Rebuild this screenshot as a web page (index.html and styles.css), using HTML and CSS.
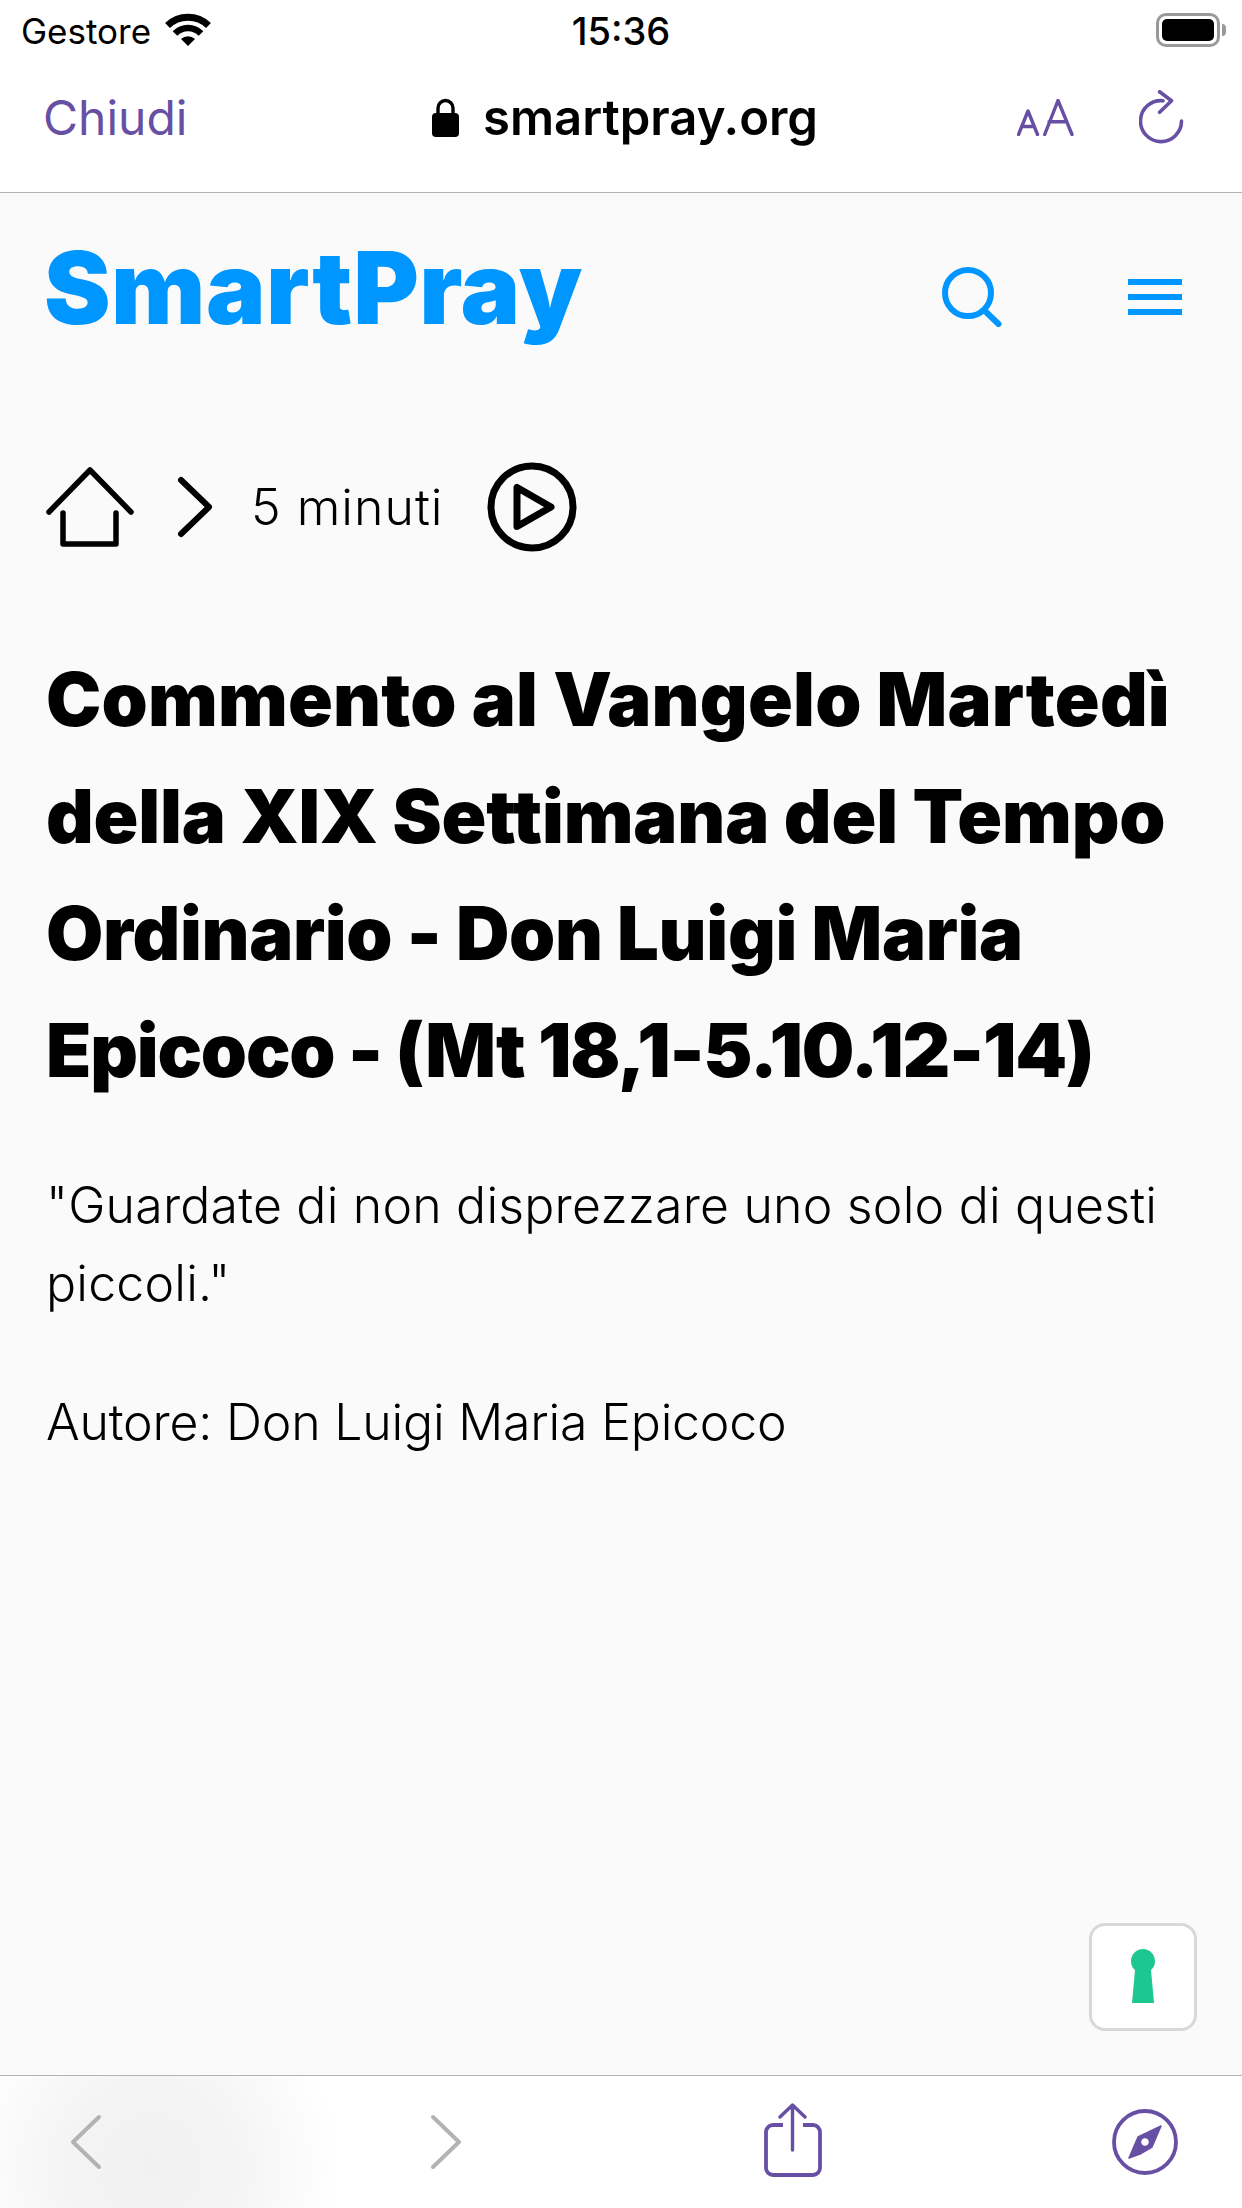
FILE: index.html
```html
<!DOCTYPE html>
<html lang="it">
<head>
  <meta charset="UTF-8">
  <meta name="viewport" content="width=device-width, initial-scale=1.0">
  <title>SmartPray</title>
  <link rel="stylesheet" href="styles.css">
</head>
<body>
  <div class="safari-top">
    <div class="status-bar">
      <div class="carrier">
        <span>Gestore</span>
        <svg class="wifi" width="46" height="33" viewBox="0 0 46 33">
          <path d="M2.500 12.500A29.500 29.500 0 0 1 43.500 12.500" fill="none" stroke="#000" stroke-width="7"/>
          <path d="M10 20.500A18 18 0 0 1 36 20.500" fill="none" stroke="#000" stroke-width="6.500"/>
          <path d="M23 33L16 26A10 10 0 0 1 30 26Z" fill="#000"/>
        </svg>
      </div>
      <div class="time">15:36</div>
      <div class="battery">
        <div class="battery-body"><div class="battery-level"></div></div>
        <div class="battery-cap"></div>
      </div>
    </div>
    <div class="nav-bar">
      <a class="close-link">Chiudi</a>
      <div class="address">
        <svg width="27" height="39" viewBox="0 0 27 39">
          <path d="M6 18V10a7.500 7.500 0 0 1 15 0v8" fill="none" stroke="#000" stroke-width="3.400"/>
          <rect x="0" y="15" width="27" height="24" rx="4" fill="#000"/>
        </svg>
        <span>smartpray.org</span>
      </div>
      <div class="nav-actions">
        <svg width="57" height="37" viewBox="0 0 57 37">
          <path d="M1.500 35.500L11 12L20.500 35.500M4.500 27.500H17.500" fill="none" stroke="#6750a4" stroke-width="3.400" stroke-linecap="round" stroke-linejoin="round"/>
          <path d="M27.700 35.500L41 1.500L55 35.500M32 22.700H50" fill="none" stroke="#6750a4" stroke-width="3.400" stroke-linecap="round" stroke-linejoin="round"/>
        </svg>
        <svg width="46" height="54" viewBox="0 0 46 54">
          <path d="M42.500 31A20.500 20.500 0 1 1 24 10.700" fill="none" stroke="#6750a4" stroke-width="3.600" stroke-linecap="round"/>
          <path d="M20.600 1.800L32.500 10.700L20.600 22.300" fill="none" stroke="#6750a4" stroke-width="3.600" stroke-linecap="round" stroke-linejoin="round"/>
        </svg>
      </div>
    </div>
  </div>

  <main class="page">
    <header class="site-header">
      <div class="logo">SmartPray</div>
      <div class="header-icons">
        <svg width="60" height="60" viewBox="0 0 60 60">
          <circle cx="26" cy="26" r="23" fill="none" stroke="#0096ff" stroke-width="6"/>
          <path d="M43 44L56.500 57" fill="none" stroke="#0096ff" stroke-width="6" stroke-linecap="round"/>
        </svg>
        <div class="hamburger"><span></span><span></span><span></span></div>
      </div>
    </header>

    <nav class="breadcrumb">
      <svg width="90" height="80" viewBox="0 0 90 80">
        <path d="M3 45L44 3L85 45" fill="none" stroke="#000" stroke-width="5.500" stroke-linecap="round" stroke-linejoin="round"/>
        <path d="M17 46V77H70V46" fill="none" stroke="#000" stroke-width="5.500" stroke-linecap="round" stroke-linejoin="round"/>
      </svg>
      <svg class="crumb-sep" width="36" height="62" viewBox="0 0 36 62">
        <path d="M4 4L32 31L4 58" fill="none" stroke="#000" stroke-width="6" stroke-linecap="round" stroke-linejoin="round"/>
      </svg>
      <span class="crumb-text">5 minuti</span>
      <svg class="crumb-play" width="90" height="90" viewBox="0 0 90 90">
        <circle cx="45" cy="45" r="41" fill="none" stroke="#000" stroke-width="7"/>
        <path d="M30 25.500V64.500L64 45Z" fill="none" stroke="#000" stroke-width="7" stroke-linejoin="round"/>
      </svg>
    </nav>

    <h1 class="title">
      <span class="title-line line-a">Commento al Vangelo Martedì</span>
      <span class="title-line line-b">della XIX Settimana del Tempo</span>
      <span class="title-line line-c">Ordinario - Don Luigi Maria</span>
      <span class="title-line line-d">Epicoco - (Mt 18,1-5.10.12-14)</span>
    </h1>
    <p class="summary">"Guardate di non disprezzare uno solo di questi piccoli."</p>
    <p class="author">Autore: Don Luigi Maria Epicoco</p>

    <button class="key-button">
      <svg width="24" height="54" viewBox="0 0 24 54">
        <path d="M12 0C18.500 0 24 5.500 24 12C24 16 22.500 19 20 21L23 54H1L4 21C1.500 19 0 16 0 12C0 5.500 5.500 0 12 0Z" fill="#1cc88f"/>
      </svg>
    </button>
  </main>

  <div class="toolbar">
    <svg width="32" height="56" viewBox="0 0 32 56">
      <path d="M29 3L3 28L29 53" fill="none" stroke="#b3b3b3" stroke-width="4" stroke-linecap="round" stroke-linejoin="round"/>
    </svg>
    <svg class="forward" width="32" height="56" viewBox="0 0 32 56">
      <path d="M3 3L29 28L3 53" fill="none" stroke="#b3b3b3" stroke-width="4" stroke-linecap="round" stroke-linejoin="round"/>
    </svg>
    <svg class="share" width="58" height="74" viewBox="0 0 58 74">
      <path d="M19 22H9A7 7 0 0 0 2 29V65A7 7 0 0 0 9 72H49A7 7 0 0 0 56 65V29A7 7 0 0 0 49 22H39" fill="none" stroke="#6750a4" stroke-width="3.800"/>
      <path d="M28.500 47V2M16 14L28.500 2L41 14" fill="none" stroke="#6750a4" stroke-width="3.400" stroke-linecap="round" stroke-linejoin="round"/>
    </svg>
    <svg class="compass" width="66" height="66" viewBox="0 0 66 66">
      <circle cx="33" cy="33" r="31" fill="none" stroke="#6750a4" stroke-width="3.800"/>
      <path fill-rule="evenodd" d="M49 17L40 38L28 45L17 49L26 28ZM33 28.500A4.500 4.500 0 1 0 33 37.500A4.500 4.500 0 1 0 33 28.500Z" fill="#6750a4" stroke="#6750a4" stroke-width="1.500" stroke-linejoin="round"/>
    </svg>
  </div>
</body>
</html>
```

FILE: styles.css
```css
* {
  box-sizing: border-box;
}
html, body {
  margin: 0;
  padding: 0;
}
body {
  width: 1242px;
  height: 2208px;
  display: flex;
  flex-direction: column;
  overflow: hidden;
  background-color: #fafafa;
  color: #000;
  font-family: "Inter", "Liberation Sans", sans-serif;
}
svg {
  display: block;
  flex-shrink: 0;
}

/* browser chrome */
.safari-top {
  height: 193px;
  background-color: #fff;
  border-bottom: 1px solid #b2b2b2;
}
.status-bar {
  height: 60px;
  padding: 13px 16px 0 21px;
  display: grid;
  grid-template-columns: 1fr auto 1fr;
  align-items: start;
}
.carrier {
  display: flex;
  align-items: flex-start;
  gap: 14px;
  font-size: 35px;
  line-height: 36px;
}
.time {
  margin-right: 5px;
  font-size: 38px;
  line-height: 36px;
  font-weight: 500;
}
.battery {
  justify-self: end;
  display: flex;
  align-items: center;
}
.battery-body {
  width: 64px;
  height: 34px;
  padding: 3px;
  border: 3px solid #999;
  border-radius: 10px;
}
.battery-level {
  height: 100%;
  background-color: #000;
  border-radius: 5px;
}
.battery-cap {
  width: 4px;
  height: 12px;
  margin-left: 2px;
  background-color: #999;
  border-radius: 0 4px 4px 0;
}
.nav-bar {
  height: 90px;
  padding: 24px 35px 0 43px;
  display: grid;
  grid-template-columns: 1fr auto 1fr;
  align-items: center;
}
.close-link {
  font-size: 48px;
  color: #6750a4;
}
.address {
  display: flex;
  align-items: center;
  gap: 24px;
  font-size: 49px;
  font-weight: 600;
}
.nav-actions {
  justify-self: end;
  display: flex;
  align-items: center;
  gap: 65px;
  padding-right: 22px;
}

/* page */
.page {
  position: relative;
  flex: 1;
  padding: 22px 46px 0;
}
.site-header {
  height: 136px;
  display: flex;
  justify-content: space-between;
  align-items: center;
  padding-right: 14px;
}
.logo {
  margin-left: -2px;
  padding-top: 10px;
  font-size: 100px;
  line-height: 126px;
  font-weight: 900;
  letter-spacing: 0.5px;
  color: #0096ff;
}
.header-icons {
  display: flex;
  align-items: center;
  gap: 126px;
  padding-top: 28px;
}
.hamburger {
  width: 54px;
  display: flex;
  flex-direction: column;
  gap: 9px;
}
.hamburger span {
  height: 6px;
  background-color: #0096ff;
}
.breadcrumb {
  margin-top: 111px;
  height: 90px;
  display: flex;
  align-items: center;
}
.crumb-sep {
  margin-left: 41px;
}
.crumb-text {
  margin-left: 38px;
  font-size: 50px;
  font-weight: 300;
  letter-spacing: 1px;
}
.crumb-play {
  margin-left: 44px;
}
.title {
  margin: 89px 0 0;
  font-size: 74px;
  line-height: 117px;
  font-weight: 900;
}
.title-line {
  display: block;
  white-space: nowrap;
}
.line-a {
  letter-spacing: 0.2px;
}
.line-b {
  letter-spacing: -0.15px;
}
.line-c {
  letter-spacing: -0.33px;
}
.line-d {
  letter-spacing: -1.2px;
}
.summary {
  margin: 57px 0 0;
  font-size: 50px;
  line-height: 78px;
  font-weight: 300;
  letter-spacing: 0.2px;
}
.author {
  margin: 61px 0 0;
  font-size: 50px;
  line-height: 78px;
  font-weight: 300;
  letter-spacing: -0.2px;
}
.key-button {
  position: absolute;
  right: 45px;
  bottom: 44px;
  width: 108px;
  height: 108px;
  padding: 23px 0 0;
  display: flex;
  justify-content: center;
  align-items: flex-start;
  background-color: #fff;
  border: 3px solid #d8d8d8;
  border-radius: 16px;
}

/* bottom toolbar */
.toolbar {
  height: 133px;
  display: flex;
  align-items: center;
  padding: 0 64px 0 70px;
  border-top: 1px solid #b2b2b2;
  background: radial-gradient(circle 190px at 150px 90px, #f1f1f1 0%, #f4f4f4 45%, #ffffff 100%), #fff;
}
.forward {
  margin-left: 328px;
}
.share {
  margin-left: 302px;
  margin-top: -5px;
}
.compass {
  margin-left: auto;
}
```
